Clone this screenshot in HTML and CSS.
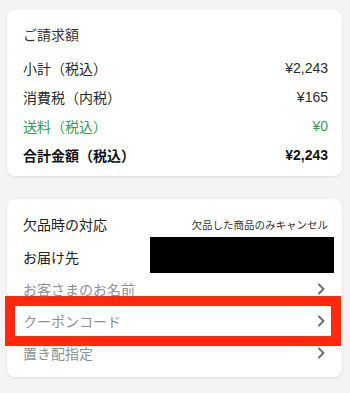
FILE: index.html
```html
<!DOCTYPE html>
<html lang="ja">
<head>
<meta charset="utf-8">
<link rel="stylesheet" href="styles.css">
</head>
<body>
<div class="page">
  <section class="card bill">
    <h2 class="bill-title">ご請求額</h2>
    <div class="bill-row"><span class="label">小計（税込）</span><span class="num">¥2,243</span></div>
    <div class="bill-row"><span class="label">消費税（内税）</span><span class="num">¥165</span></div>
    <div class="bill-row green"><span class="label">送料（税込）</span><span class="num">¥0</span></div>
    <div class="bill-row total"><span class="label">合計金額（税込）</span><span class="num">¥2,243</span></div>
  </section>

  <section class="card opts">
    <div class="opt-row first"><span class="opt-label">欠品時の対応</span><span class="opt-value">欠品した商品のみキャンセル</span></div>
    <div class="opt-row addr"><span class="opt-label">お届け先</span><span class="redact"></span></div>
    <div class="opt-row link"><span class="opt-label muted">お客さまのお名前</span>
      <svg class="chev" width="9" height="12" viewBox="0 0 9 12"><path d="M2 1.5 L6.5 6 L2 10.5" fill="none" stroke="#6b7079" stroke-width="2" stroke-linecap="round" stroke-linejoin="round"/></svg></div>
    <div class="opt-row link coupon"><span class="opt-label muted">クーポンコード</span>
      <svg class="chev" width="9" height="12" viewBox="0 0 9 12"><path d="M2 1.5 L6.5 6 L2 10.5" fill="none" stroke="#6b7079" stroke-width="2" stroke-linecap="round" stroke-linejoin="round"/></svg>
      <span class="highlight"></span></div>
    <div class="opt-row link"><span class="opt-label muted">置き配指定</span>
      <svg class="chev" width="9" height="12" viewBox="0 0 9 12"><path d="M2 1.5 L6.5 6 L2 10.5" fill="none" stroke="#6b7079" stroke-width="2" stroke-linecap="round" stroke-linejoin="round"/></svg></div>
  </section>
</div>
</body>
</html>
```

FILE: styles.css
```css
* { box-sizing: border-box; }
html, body {
  margin: 0;
  padding: 0;
  background: #f4f4f4;
  font-family: "Noto Sans CJK JP", "Noto Sans", sans-serif;
  color: #222;
}
.page {
  width: 350px;
  height: 393px;
  padding: 10px 8px 0 7px;
  display: flex;
  flex-direction: column;
  gap: 23px;
  overflow: hidden;
}
.card {
  background: #fff;
  border-radius: 8px;
  box-shadow: 0 1px 3px rgba(0,0,0,0.09);
}
.bill {
  padding: 13px 14px 7px 16px;
}
.bill-title {
  margin: 0 0 8px 0;
  font-size: 14px;
  font-weight: normal;
  line-height: 22px;
  color: #333;
}
.bill-row {
  height: 29px;
  display: flex;
  align-items: center;
  justify-content: space-between;
  font-size: 14px;
  color: #2a2a2a;
}
.num {
  font-family: "Liberation Sans", Arial, sans-serif;
  font-size: 14px;
}
.bill-row.green { color: #3a9a56; }
.bill-row.total { font-weight: bold; color: #111; }

.opts {
  padding: 12px 14px 8px 16px;
}
.opt-row {
  display: flex;
  align-items: center;
  justify-content: space-between;
  font-size: 14px;
  position: relative;
}
.opt-row.first { height: 26px; }
.opt-row.addr { height: 36px; padding-top: 3px; }
.opt-row.link { height: 32px; }
.opt-label { color: #222; }
.opt-label.muted { color: #909090; }
.opt-value {
  font-size: 10.5px;
  color: #333;
}
.redact {
  width: 184px;
  height: 36px;
  background: #000;
  margin-right: -6px;
  margin-top: -3px;
}
.chev { margin-right: 2px; }
.highlight {
  position: absolute;
  left: -18px;
  right: -13px;
  top: -9px;
  bottom: -9px;
  border: 10px solid #ff2a0e;
  pointer-events: none;
}
```
